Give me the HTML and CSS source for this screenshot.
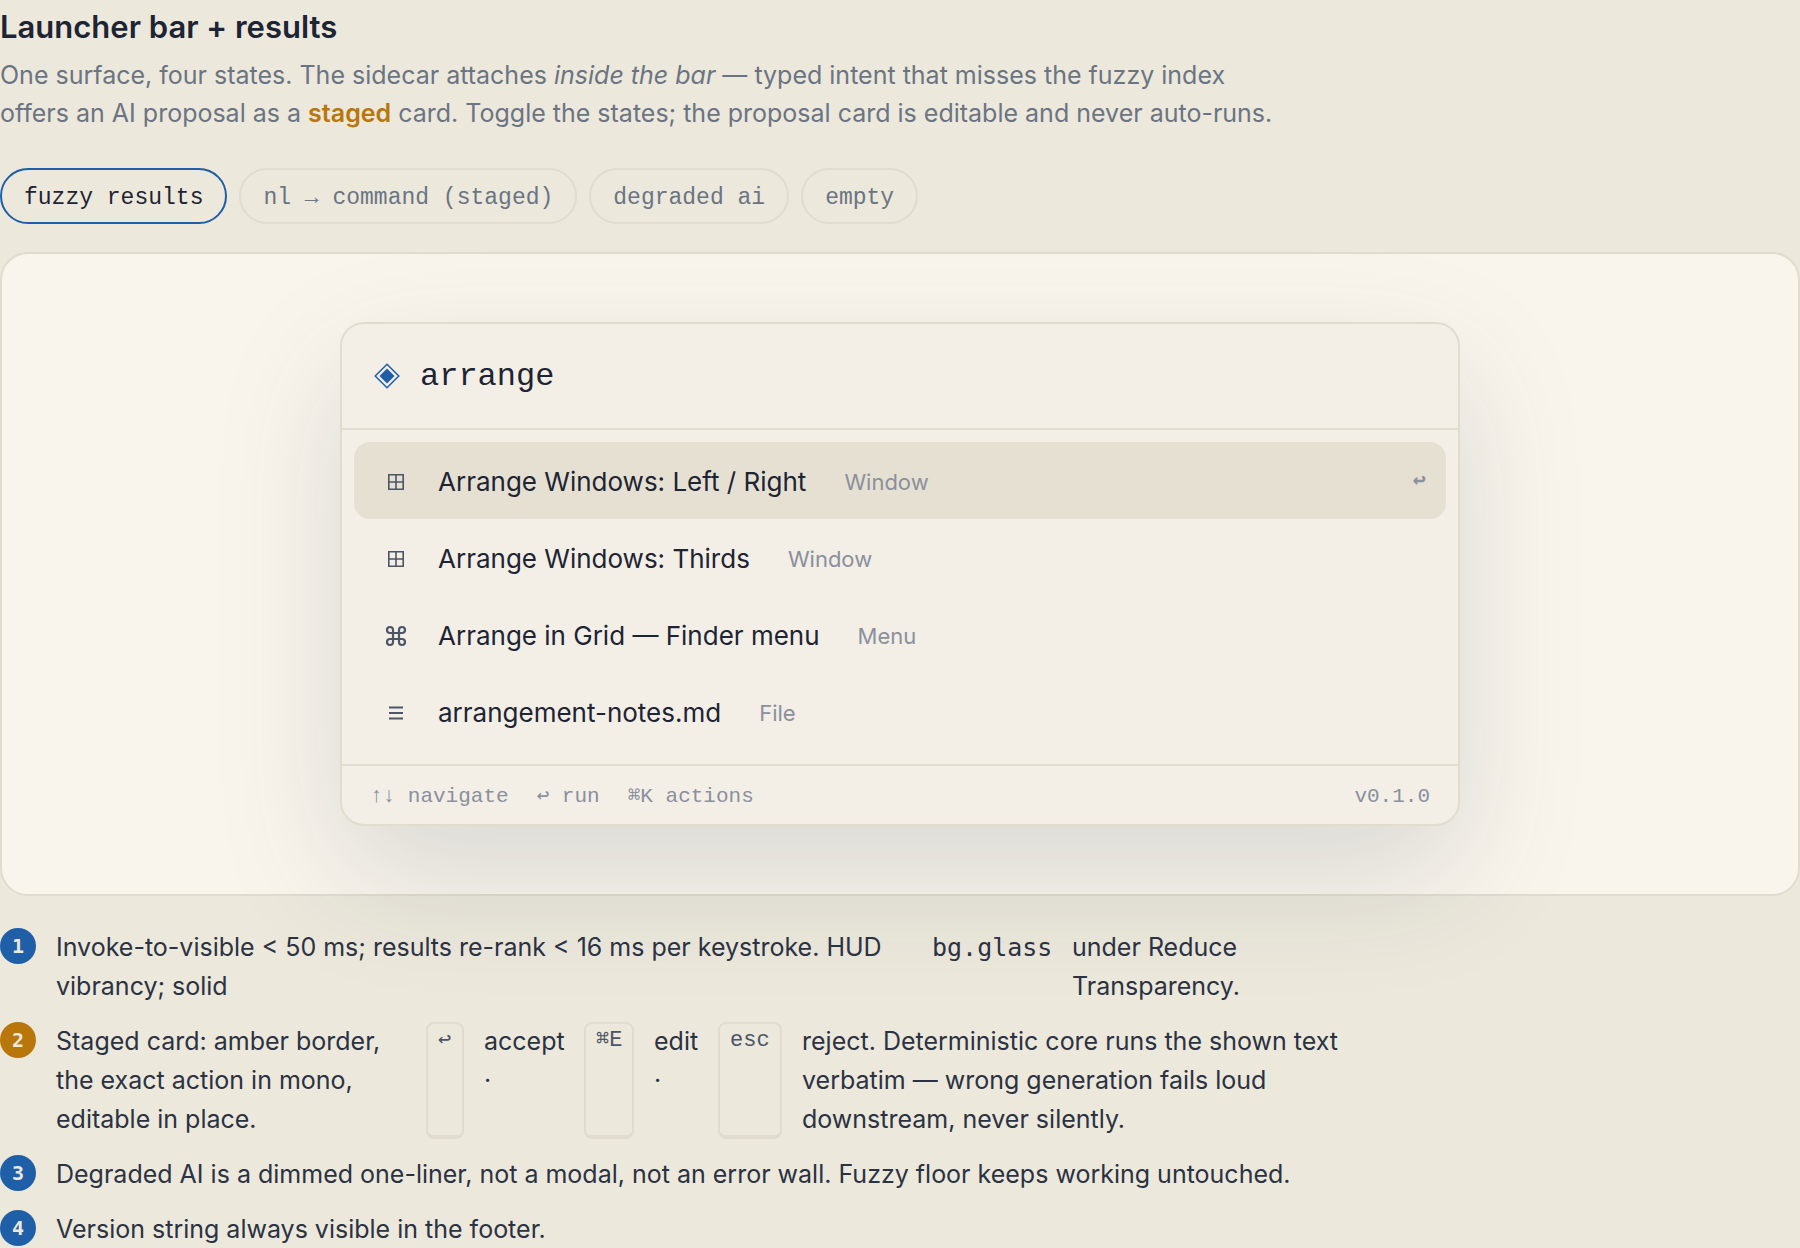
FILE: index.html
```html
<!DOCTYPE html>
<html lang="en">
<head>
<meta charset="utf-8">
<title>Launcher bar + results</title>
<link rel="stylesheet" href="styles.css">
</head>
<body>
<main class="page">
  <h1 class="title">Launcher bar + results</h1>
  <p class="lede">One surface, four states. The sidecar attaches <em>inside the bar</em> — typed intent that misses the fuzzy index offers an AI proposal as a <strong class="lede-staged">staged</strong> card. Toggle the states; the proposal card is editable and never auto-runs.</p>

  <div class="states">
    <button type="button" class="pill pill-active">fuzzy results</button>
    <button type="button" class="pill">nl → command (staged)</button>
    <button type="button" class="pill">degraded ai</button>
    <button type="button" class="pill">empty</button>
  </div>

  <section class="stage">
    <div class="launcher">
      <label class="search">
        <svg class="search-icon" viewBox="0 0 26 26" aria-hidden="true"><path d="M13 1.2 24.8 13 13 24.8 1.2 13Z" fill="none" stroke="currentColor" stroke-width="1.5"/><path d="M13 5.5 20.5 13 13 20.5 5.5 13Z" fill="currentColor"/></svg>
        <input class="search-input" type="text" value="arrange" aria-label="Command">
      </label>
      <ul class="results">
        <li class="row row-selected">
          <svg class="row-icon" viewBox="0 0 24 24" aria-hidden="true"><path d="M4.8 4.8h14.4v14.4H4.8ZM12 4.8v14.4M4.8 12h14.4" fill="none" stroke="currentColor" stroke-width="1.6"/></svg>
          <span class="row-name">Arrange Windows: Left / Right</span>
          <span class="row-kind">Window</span>
          <span class="row-key">↩</span>
        </li>
        <li class="row">
          <svg class="row-icon" viewBox="0 0 24 24" aria-hidden="true"><path d="M4.8 4.8h14.4v14.4H4.8ZM12 4.8v14.4M4.8 12h14.4" fill="none" stroke="currentColor" stroke-width="1.6"/></svg>
          <span class="row-name">Arrange Windows: Thirds</span>
          <span class="row-kind">Window</span>
        </li>
        <li class="row">
          <svg class="row-icon" viewBox="0 0 24 24" aria-hidden="true"><path d="M9 9H6a3 3 0 1 1 3-3v12a3 3 0 1 1-3-3h12a3 3 0 1 1-3 3V6a3 3 0 1 1 3 3Z" fill="none" stroke="currentColor" stroke-width="2.2"/></svg>
          <span class="row-name">Arrange in Grid — Finder menu</span>
          <span class="row-kind">Menu</span>
        </li>
        <li class="row">
          <svg class="row-icon" viewBox="0 0 24 24" aria-hidden="true"><path d="M5 6.500h14M5 12h14M5 17.500h14" fill="none" stroke="currentColor" stroke-width="2.2"/></svg>
          <span class="row-name">arrangement-notes.md</span>
          <span class="row-kind">File</span>
        </li>
      </ul>
      <footer class="hints">
        <span>↑↓ navigate</span>
        <span>↩ run</span>
        <span>⌘K actions</span>
        <span class="version">v0.1.0</span>
      </footer>
    </div>
  </section>

  <ol class="notes">
    <li class="note note-glass">
      <span class="num">1</span>
      <span>Invoke-to-visible &lt; 50 ms; results re-rank &lt; 16 ms per keystroke. HUD vibrancy; solid</span>
      <code class="code">bg.glass</code>
      <span>under Reduce Transparency.</span>
    </li>
    <li class="note note-keys">
      <span class="num num-amber">2</span>
      <span>Staged card: amber border, the exact action in mono, editable in place.</span>
      <kbd class="kbd">↩</kbd>
      <span>accept ·</span>
      <kbd class="kbd">⌘E</kbd>
      <span>edit ·</span>
      <kbd class="kbd">esc</kbd>
      <span>reject. Deterministic core runs the shown text verbatim — wrong generation fails loud downstream, never silently.</span>
    </li>
    <li class="note">
      <span class="num">3</span>
      <span>Degraded AI is a dimmed one-liner, not a modal, not an error wall. Fuzzy floor keeps working untouched.</span>
    </li>
    <li class="note">
      <span class="num">4</span>
      <span>Version string always visible in the footer.</span>
    </li>
  </ol>
</main>
</body>
</html>
```
FILE: styles.css
```css
:root {
  --bg: #ece8dc;
  --panel: #faf5ec;
  --card: #f3eee6;
  --line: #e2dccf;
  --selected: #e6e0d2;
  --ink: #1d2433;
  --ink-soft: #2b3242;
  --icon: #4b5566;
  --muted: #6b7482;
  --faint: #8a909d;
  --accent: #1f5fa8;
  --amber: #b9770b;
  --sans: Inter, "Noto Sans", sans-serif;
  --mono: "Liberation Mono", "DejaVu Sans Mono", monospace;
}

* { box-sizing: border-box; }

html { scrollbar-width: none; }

body {
  margin: 0;
  background: var(--bg);
  color: var(--ink);
  font-family: var(--sans);
  font-size: 25px;
  line-height: 39px;
}

.title {
  margin: 0;
  padding-top: 4px;
  font-size: 31px;
  line-height: 46px;
  font-weight: 600;
}

.lede {
  margin: 6px 0 0;
  max-width: 1290px;
  color: var(--muted);
  line-height: 38px;
}

.lede-staged { color: var(--amber); font-weight: 600; }

.states {
  display: flex;
  gap: 12px;
  margin-top: 36px;
}

.pill {
  height: 56px;
  padding: 4px 22px 0;
  border: 2px solid #e1dccf;
  border-radius: 28px;
  background: transparent;
  color: var(--muted);
  font-family: var(--mono);
  font-size: 23px;
}

.pill-active {
  border-color: var(--accent);
  color: var(--ink);
}

.stage {
  display: flex;
  justify-content: center;
  margin-top: 28px;
  padding: 68px;
  border: 2px solid var(--line);
  border-radius: 28px;
  background: var(--panel);
}

.launcher {
  width: 100%;
  max-width: 1120px;
  border: 2px solid var(--line);
  border-radius: 24px;
  background: var(--card);
  box-shadow: 0 48px 128px rgba(28, 48, 72, 0.15);
}

.search {
  display: flex;
  align-items: center;
  gap: 20px;
  height: 106px;
  padding: 0 32px;
  border-bottom: 2px solid var(--line);
}

.search-icon { width: 26px; height: 26px; color: var(--accent); }

.search-input {
  flex: 1;
  min-width: 0;
  padding: 2px 0 0;
  border: 0;
  outline: 0;
  background: transparent;
  color: var(--ink);
  font-family: var(--mono);
  font-size: 32px;
  line-height: 40px;
}

.results {
  margin: 0;
  padding: 12px 12px 14px;
  list-style: none;
}

.row {
  display: flex;
  align-items: center;
  gap: 20px;
  height: 77px;
  padding: 2px 20px 0;
  border-radius: 16px;
}

.row-selected { background: var(--selected); }

.row-icon { width: 44px; height: 24px; color: var(--icon); }

.row-name { font-size: 26px; }

.row-kind {
  margin-left: 18px;
  padding-top: 2px;
  color: var(--faint);
  font-size: 22px;
}

.row-key {
  margin-left: auto;
  color: var(--faint);
  font-family: var(--mono);
  font-size: 22px;
  font-weight: 700;
}

.hints {
  display: flex;
  align-items: center;
  gap: 28px;
  height: 60px;
  padding: 2px 28px 0;
  border-top: 2px solid var(--line);
  color: var(--faint);
  font-family: var(--mono);
  font-size: 21px;
}

.version { margin-left: auto; }

.notes {
  display: grid;
  gap: 16px;
  max-width: 1360px;
  margin: 32px 0 0;
  padding: 0;
  color: var(--ink-soft);
  list-style: none;
}

.note {
  display: grid;
  grid-template-columns: 36px 1fr;
  gap: 20px;
}

.note-glass { grid-template-columns: 36px 856px 120px 1fr; }

.note-keys { grid-template-columns: 36px 350px 38px 80px 50px 44px 64px 1fr; }

.note-glass > :last-child { max-width: 200px; }

.num {
  display: flex;
  align-items: center;
  justify-content: center;
  height: 36px;
  border-radius: 50%;
  background: var(--accent);
  color: var(--bg);
  font-family: "DejaVu Sans Mono", monospace;
  font-size: 20px;
  font-weight: 700;
}

.num-amber { background: var(--amber); }

.code { font-family: "DejaVu Sans Mono", monospace; }

.kbd {
  padding: 4px 10px 0;
  border: 2px solid #e1dccf;
  border-bottom-width: 4px;
  border-radius: 8px;
  color: var(--icon);
  font-family: var(--mono);
  font-size: 22px;
  line-height: 26px;
}
```
